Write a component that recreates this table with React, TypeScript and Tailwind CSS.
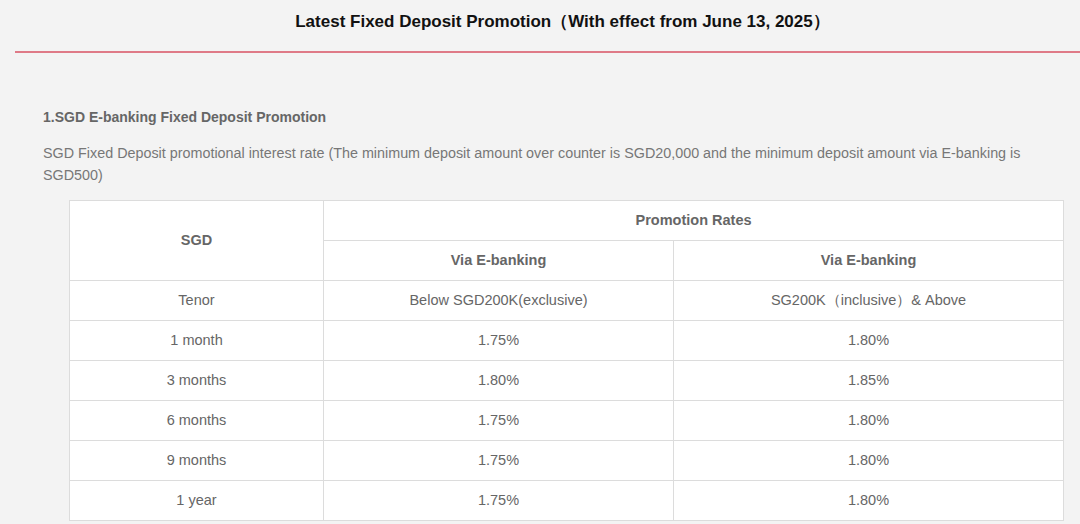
const rows = [
  ["1 month", "1.75%", "1.80%"],
  ["3 months", "1.80%", "1.85%"],
  ["6 months", "1.75%", "1.80%"],
  ["9 months", "1.75%", "1.80%"],
  ["1 year", "1.75%", "1.80%"],
]

export default function App() {
  const cell = "h-[40px] border border-[#dcdcdc] text-center align-middle p-0"
  return (
    <div className="min-h-screen w-full overflow-hidden bg-[#f3f3f3] font-['Liberation_Sans',Arial,sans-serif]">
      <div className="ml-[15px] w-[1095px]">
        {/* Title */}
        <div className="h-[53px] border-b-2 border-[#df7a87] pt-[11px] text-center text-[17px] font-bold leading-[22px] text-[#111]">
          Latest Fixed Deposit Promotion（With effect from June 13, 2025）
        </div>

        <div className="pl-[28px] pt-[53px]">
          <h2 className="text-[14px] font-bold leading-[22px] text-[#666]">1.SGD E-banking Fixed Deposit Promotion</h2>
          <p className="mt-[14px] w-[1000px] text-[14.35px] leading-[22px] text-[#777]">
            SGD Fixed Deposit promotional interest rate (The minimum deposit amount over counter is SGD20,000 and the
            minimum deposit amount via E-banking is SGD500)
          </p>

          <table className="mt-[14px] ml-[26px] w-[994px] table-fixed border-collapse bg-white text-[14.5px] text-[#666]">
            <colgroup>
              <col className="w-[254px]" />
              <col className="w-[350px]" />
              <col className="w-[390px]" />
            </colgroup>
            <tbody>
              <tr>
                <td rowSpan={2} className={`${cell} font-bold`}>SGD</td>
                <td colSpan={2} className={`${cell} font-bold`}>Promotion Rates</td>
              </tr>
              <tr>
                <td className={`${cell} font-bold`}>Via E-banking</td>
                <td className={`${cell} font-bold`}>Via E-banking</td>
              </tr>
              <tr>
                <td className={cell}>Tenor</td>
                <td className={cell}>Below SGD200K(exclusive)</td>
                <td className={cell}>SG200K（inclusive）&amp; Above</td>
              </tr>
              {rows.map((r) => (
                <tr key={r[0]}>
                  <td className={cell}>{r[0]}</td>
                  <td className={cell}>{r[1]}</td>
                  <td className={cell}>{r[2]}</td>
                </tr>
              ))}
            </tbody>
          </table>
        </div>
      </div>
    </div>
  )
}
